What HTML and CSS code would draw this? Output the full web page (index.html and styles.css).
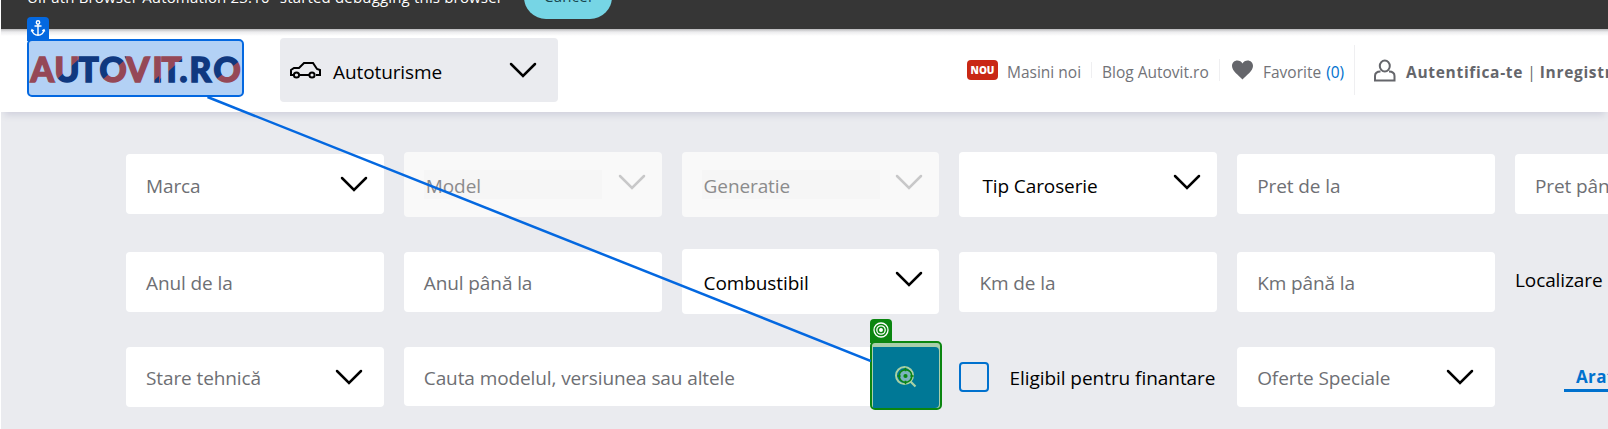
FILE: index.html
```html
<!DOCTYPE html>
<html lang="ro">
<head>
<meta charset="utf-8">
<title>Autovit.ro</title>
<link rel="stylesheet" href="styles.css">
</head>
<body>
<svg class="defs" width="0" height="0">
  <symbol id="chev" viewBox="0 0 28 16"><path d="M2 2 L14 14 L26 2" fill="none" stroke="currentColor" stroke-width="2.5" stroke-linecap="round"/></symbol>
</svg>
<div class="infobar">
  <span class="info-text">UiPath Browser Automation 23.10" started debugging this browser</span>
  <span class="cancel">Cancel</span>
</div>
<header class="header">
  <div class="logo">
    <svg width="213" height="54" viewBox="29 41 213 54">
      <defs>
        <pattern id="two" patternUnits="userSpaceOnUse" x="0" y="0" width="300" height="120">
          <rect width="300" height="120" fill="#954857"/>
          <path fill="#10387f" d="M79 59 L55 81 V90 H101 V81 L126 59 V50 H79Z M150 84 L159 76 V90 H150Z M160 79 L184 57 V50 H242 V59 L214 81 V90 H160Z"/>
        </pattern>
      </defs>
      <text class="logo-text" y="82" x="30.5 54.5 78.500 99.5 126 152.500 161.500 179.5 189.500 213.500" fill="url(#two)">AUTOVIT.RO</text>
    </svg>
    <span class="tag tag-anchor">
      <svg width="22" height="22" viewBox="0 0 22 22" fill="none" stroke="#fff" stroke-width="1.4"><circle cx="11" cy="5.5" r="1.7"/><path d="M11 7.2V18M7.5 9h7M5 13c0 3 3 5.3 6 5.3s6-2.300 6-5.300M4.300 14.500L5 12.800l1.700 1M17.700 14.500L17 12.800l-1.700 1"/></svg>
    </span>
  </div>
  <div class="category">
    <svg class="car" width="32" height="18" viewBox="0 0 32 18" fill="none" stroke="#000" stroke-width="2"><path d="M5 14H2V9l3-2h5l5-5h9l4 6 3 1v5h-4M10.500 14h9.500"/><circle cx="7.500" cy="14" r="2.600"/><circle cx="23" cy="14" r="2.600"/></svg>
    <span class="txt category-name">Autoturisme</span>
    <svg class="chev"><use href="#chev"/></svg>
  </div>
  <nav class="nav">
    <span class="nou">NOU</span>
    <span class="link masini">Masini noi</span>
    <i class="sep s1"></i>
    <span class="link blog">Blog Autovit.ro</span>
    <i class="sep s2"></i>
    <svg class="heart" width="21" height="20" viewBox="0 0 21 20"><path fill="#65666b" d="M10.500 19.500C7 15.500 0 11 0 6 0 2.700 2.500.500 5.300.500c2.300 0 4.200 1.200 5.200 3 1-1.800 2.900-3 5.200-3C18.500.500 21 2.700 21 6c0 5-7 9.500-10.500 13.500z"/></svg>
    <span class="link fav">Favorite <b class="count">(0)</b></span>
    <i class="sep s3"></i>
    <svg class="user" width="22" height="23" viewBox="0 0 22 23" fill="none" stroke="#65666b" stroke-width="2"><path d="M6.500 12.500C3 12.500 1 14.500 1 17v4.500h19.500V17c0-2.500-2-4.500-5.500-4.500"/><ellipse cx="10.800" cy="7" rx="5" ry="5.500"/></svg>
    <span class="link auth"><b>Autentifica-te</b><span class="pipe">|</span><b>Inregistreaza-te</b></span>
  </nav>
</header>
<main class="search">
  <div class="row row1">
    <div class="cell small marca"><span class="txt">Marca</span><svg class="chev"><use href="#chev"/></svg></div>
    <div class="cell big off"><span class="txt inner">Model</span><svg class="chev"><use href="#chev"/></svg></div>
    <div class="cell big off"><span class="txt inner">Generatie</span><svg class="chev"><use href="#chev"/></svg></div>
    <div class="cell big on tip"><span class="txt">Tip Caroserie</span><svg class="chev"><use href="#chev"/></svg></div>
    <div class="cell small"><span class="txt">Pret de la</span></div>
    <div class="cell small"><span class="txt">Pret până la</span></div>
  </div>
  <div class="row row2">
    <div class="cell small"><span class="txt">Anul de la</span></div>
    <div class="cell small"><span class="txt">Anul până la</span></div>
    <div class="cell big on comb"><span class="txt">Combustibil</span><svg class="chev"><use href="#chev"/></svg></div>
    <div class="cell small"><span class="txt">Km de la</span></div>
    <div class="cell small"><span class="txt">Km până la</span></div>
    <div class="plain"><span class="txt">Localizare</span></div>
  </div>
  <div class="row row3">
    <div class="cell low"><span class="txt">Stare tehnică</span><svg class="chev"><use href="#chev"/></svg></div>
    <div class="query"><span class="txt">Cauta modelul, versiunea sau altele</span>
      <div class="target">
        <span class="tag tag-target"><svg width="22" height="22" viewBox="0 0 22 22" fill="none" stroke="#fff" stroke-width="1.300"><circle cx="11" cy="11" r="7"/><circle cx="11" cy="11" r="4.200"/><circle cx="11" cy="11" r="1.300" fill="#fff"/></svg></span>
        <div class="target-fill">
          <svg width="24" height="24" viewBox="0 0 24 24" fill="none"><path d="M15.500 15.500l6 6" stroke="#a9d1a4" stroke-width="2.200"/><circle cx="10.500" cy="10.500" r="8.500" stroke="#a9d1a4" stroke-width="2"/><circle cx="11.500" cy="11" r="6.300" fill="#7bb3bd" stroke="#0b8610" stroke-width="1.600"/><path d="M11.500 2.800v3.400M11.500 15.800v3.400M3.300 11h3.400M16.300 11h3.400" stroke="#0b8610" stroke-width="1.600"/><circle cx="11.500" cy="11" r="2.100" fill="#0b8610"/></svg>
        </div>
      </div>
    </div>
    <div class="check"><span class="box"></span><span class="txt">Eligibil pentru finantare</span></div>
    <div class="cell low offers"><span class="txt">Oferte Speciale</span><svg class="chev"><use href="#chev"/></svg></div>
    <div class="more"><span>Arata mai mult</span></div>
  </div>
</main>
<svg class="link-line" width="1608" height="429"><path d="M207.500 97L871 361" stroke="#0468e0" stroke-width="2.500"/></svg>
</body>
</html>
```
FILE: styles.css
```css
* { box-sizing: border-box; }
html { overflow: hidden; }
body { margin: 0; width: 1608px; height: 429px; overflow: hidden; position: relative; background: #eaebef; font-family: "Open Sans", "Noto Sans", sans-serif; border-left: 1px solid #fff; }
.defs { position: absolute; }
svg { display: block; flex: none; }
.infobar { height: 29px; background: #363636; display: flex; align-items: flex-start; padding-left: 26px; overflow: hidden; white-space: nowrap; }
.info-text { width: 497px; margin-top: -14px; font-size: 15px; line-height: 22px; letter-spacing: .17px; color: #fff; }
.cancel { width: 88px; height: 44px; margin-top: -25px; border-radius: 22px; background: #76d5e5; color: #17454d; font-size: 15px; line-height: 42px; letter-spacing: .3px; text-align: center; }
.header { height: 83px; background: linear-gradient(#b9b9bb 0, #ececee 3px, #fff 7px); display: flex; padding: 9px 0 0 26px; box-shadow: 0 6px 7px -3px #cfd0dc; position: relative; white-space: nowrap; }
.logo { width: 217px; height: 58px; flex: none; margin-top: 1px; border: 2px solid #0468e0; border-radius: 5px; background: #b3d1f5; position: relative; }
.logo-text { font: 900 33.5px Lato, sans-serif; stroke: url(#two); stroke-width: 1.5px; }
.tag { position: absolute; width: 22px; height: 24px; left: -2px; top: -24px; border-radius: 4px 4px 0 0; }
.tag-anchor { background: #0468e0; }
.category { width: 278px; height: 64px; flex: none; margin-left: 36px; background: #eaebef; border-radius: 4px; display: flex; padding: 0 21px 0 9px; }
.car { margin-top: 23px; }
.category-name { margin-left: 12px; margin-top: 20px; color: #000; }
.chev { width: 28px; height: 16px; margin-left: auto; color: #000; }
.category .chev { margin-top: 24px; }
.txt { font-size: 19px; line-height: 28px; letter-spacing: -.1px; white-space: nowrap; }
.nav { display: flex; flex: none; margin-left: 409px; height: 64px; align-items: center; color: #727378; }
.nou { width: 31px; height: 20px; border-radius: 4px; background: #c92815; color: #fff; font: 800 10px/20px "Open Sans", sans-serif; text-align: center; }
.link { font-size: 15.5px; line-height: 22px; margin-top: 3px; letter-spacing: 0; }
.masini { margin-left: 9px; width: 84px; }
.sep { width: 1px; background: #efeff1; }
.s1 { height: 16px; }
.s2 { height: 22px; }
.s3 { height: 50px; }
.blog { margin-left: 10px; width: 117px; }
.heart { margin-left: 12px; }
.fav { margin-left: 10px; width: 91px; }
.count { font-weight: 400; color: #0071ce; margin-left: 1px; }
.user { margin-left: 19px; }
.auth { margin-left: 10px; color: #65666b; }
.auth b { letter-spacing: .7px; }
.pipe { margin: 0 4px; }
.search { height: 317px; padding: 40px 0 0 125px; }
.row { display: flex; gap: 20px; width: 1650px; }
.row1 { height: 97px; }
.row2 { height: 98px; }
.cell { width: 257.800px; flex: none; background: #fff; border-radius: 4px; display: flex; padding: 0 17px 0 20px; color: #6e6f74; }
.small { height: 60px; margin-top: 2px; }
.small .txt { margin-top: 18px; }
.row2 .small { margin-top: 3px; }
.row2 .small .txt { margin-top: 17px; }
.marca { padding-right: 16px; }
.marca .chev { margin-top: 22px; }
.big { height: 65px; padding-right: 16px; }
.big .txt { margin-top: 20px; }
.big .chev { margin-top: 22px; }
.on { color: #000; }
.off { background: #f9f9f9; color: #8b8b8c; }
.off .chev { color: #c8c8c9; }
.off .inner { margin-top: 18px; height: 29px; width: 178px; line-height: 32px; background: #f6f6f6; padding-left: 2px; }
.tip .txt { margin-left: 3px; }
.comb .txt { margin-left: 2px; }
.plain .txt { display: block; margin-top: 17px; }
.low { height: 60px; padding-right: 21px; }
.low .txt, .query > .txt { margin-top: 17px; }
.low .chev { margin-top: 22px; }
.query { width: 535.600px; height: 59px; flex: none; background: #fff; border-radius: 4px; padding: 0 0 0 20px; display: flex; color: #6e6f74; }
.target { width: 72px; height: 69px; margin: -6px -3px 0 auto; border: 2px solid #0b8610; border-radius: 5px; background: #a9cfaa; padding-top: 4px; position: relative; }
.tag-target { background: #0b8610; }
.target-fill { height: 61px; background: #007896; border-radius: 0 4px 4px 0; width: 66px; margin-left: 1px; padding: 18px 0 0 21px; }
.check { width: 257.800px; display: flex; flex: none; color: #000; }
.box { width: 30px; height: 30px; margin-top: 15px; border: 2px solid #0071ce; border-radius: 4px; }
.check .txt { margin: 17px 0 0 20px; letter-spacing: -.05px; }
.more { padding-left: 49px; color: #0071ce; font-weight: 700; font-size: 17px; }
.more span { display: block; margin-top: 16px; height: 29px; line-height: 28px; padding-left: 12px; letter-spacing: .4px; border-bottom: 3px solid #0071ce; }
.link-line { position: absolute; left: -1px; top: 0; pointer-events: none; clip-path: polygon(0 0, 871px 0, 871px 429px, 0 429px); }
```
